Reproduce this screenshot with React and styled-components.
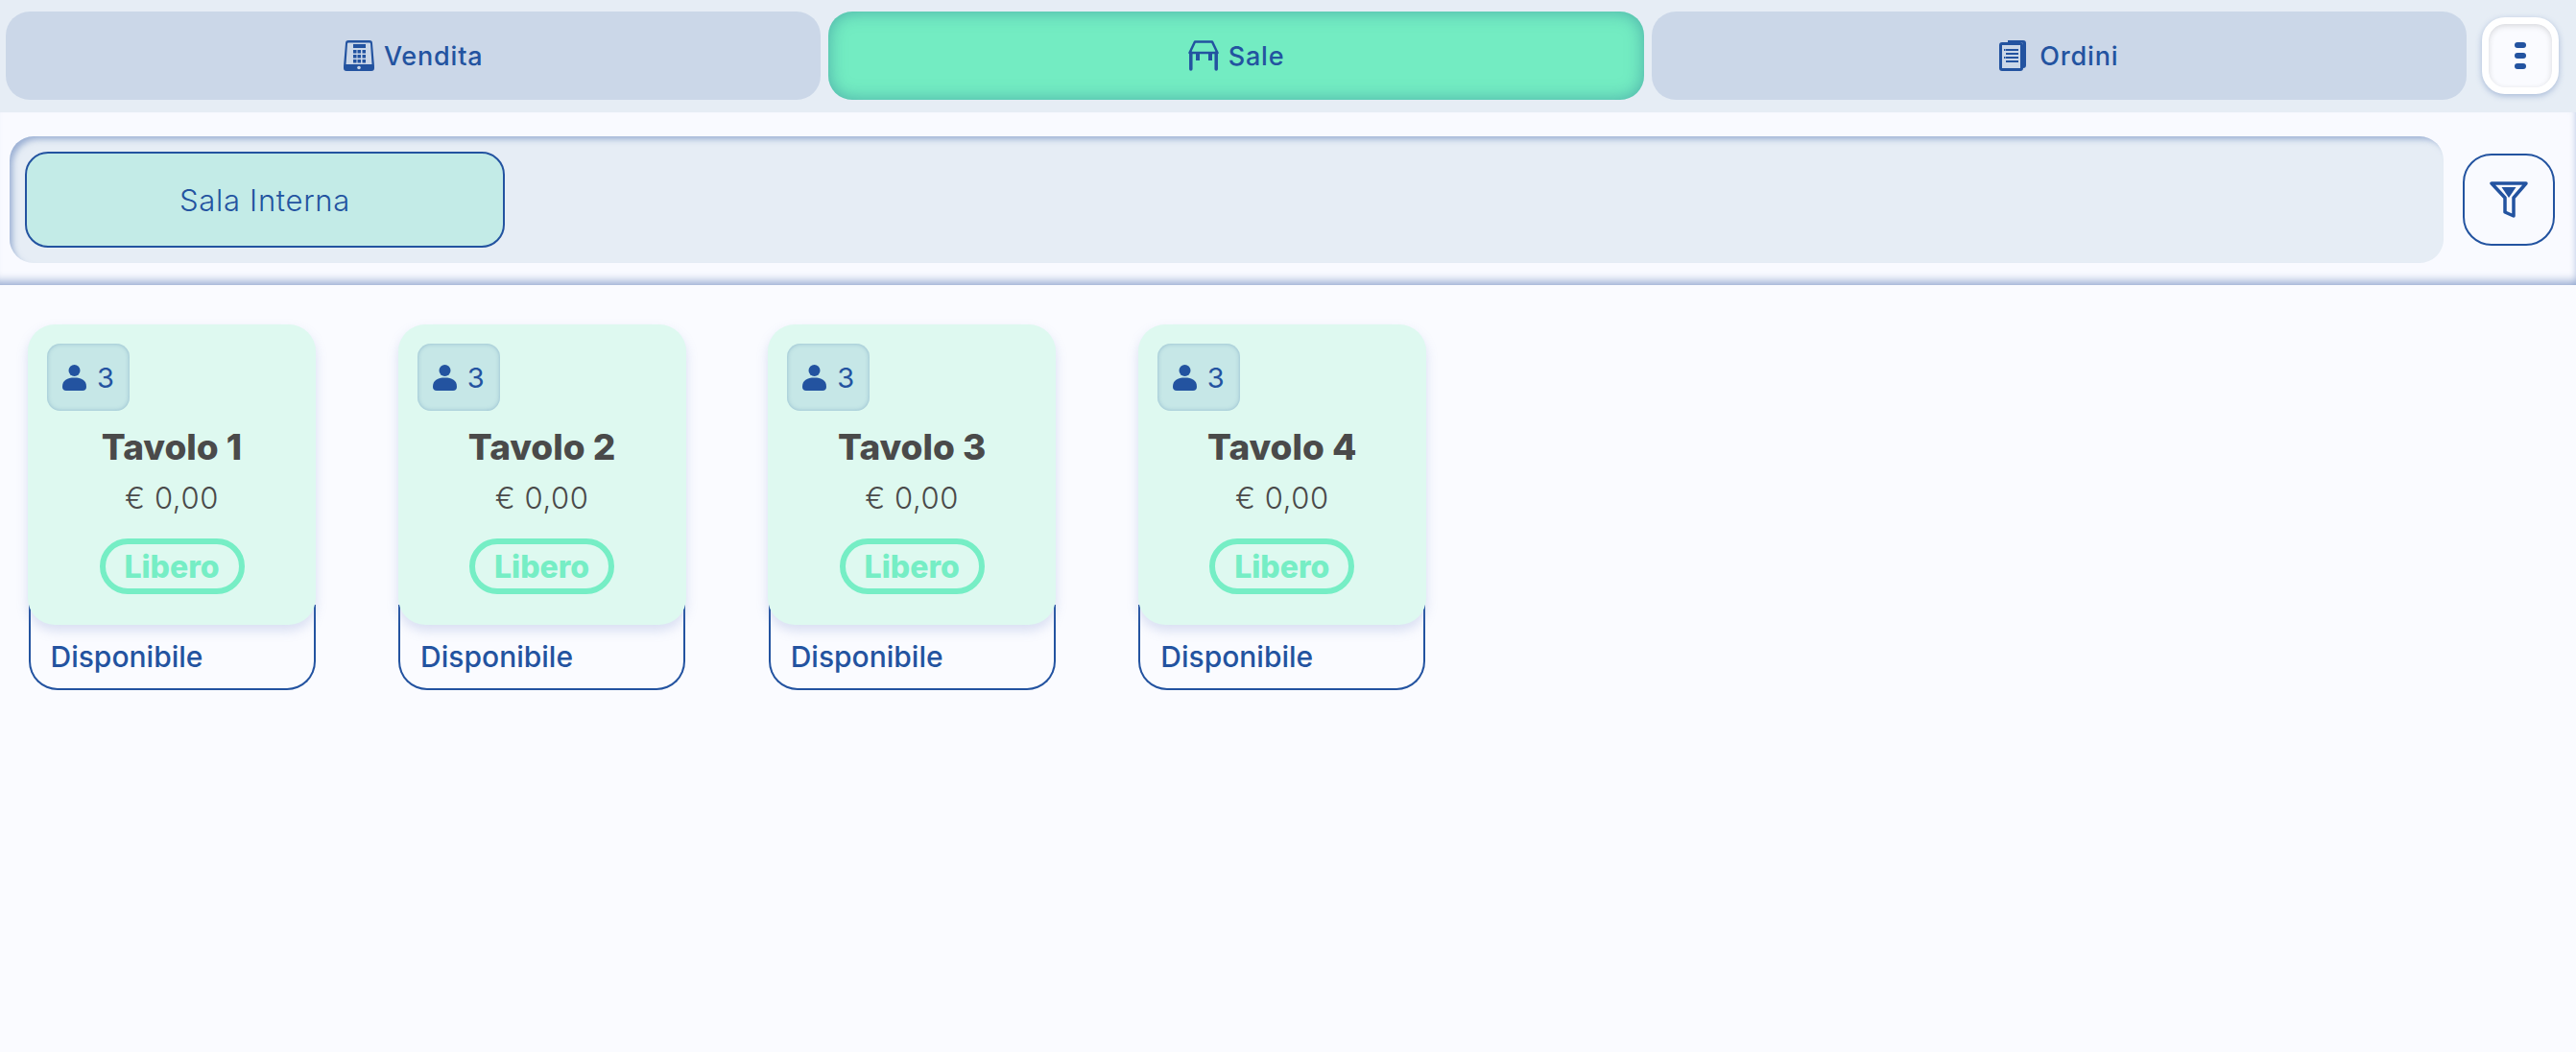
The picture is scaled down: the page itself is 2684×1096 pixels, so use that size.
import React from 'react';
import styled, { createGlobalStyle } from 'styled-components';

const BLUE = '#2353a0';

const Global = createGlobalStyle`
    html, body { margin: 0; padding: 0; background: #fafbff; }
    body { font-family: 'Inter', 'Liberation Sans', sans-serif; }
    * { box-sizing: border-box; }
`;

const Page = styled.div`
    display: flex;
    flex-direction: column;
    width: 2684px;
    height: 1096px;
    background: #fafbff;
    overflow: hidden;
`;

const Header = styled.div`
    display: flex;
    align-items: flex-start;
    height: 117px;
    padding: 12px 18px 0 6px;
    background: #e6edf5;
`;

const Tabs = styled.div`
    display: flex;
    gap: 8px;
    width: 2564px;
`;

const Tab = styled.div`
    flex: 1;
    height: 92px;
    display: flex;
    align-items: center;
    justify-content: center;
    gap: ${p => p.$gap}px;
    border-radius: 25px;
    color: ${BLUE};
    font-size: 27px;
    font-weight: 450;
    letter-spacing: 0.8px;
    background: ${p => (p.$active ? '#73ecc2' : '#cbd7e8')};
    box-shadow: ${p => (p.$active ? 'inset 0 0 18px rgba(50, 130, 150, 0.6)' : 'none')};
`;

const MenuButton = styled.div`
    width: 80px;
    height: 80px;
    margin: 6px 0 0 16px;
    display: flex;
    flex-direction: column;
    align-items: center;
    justify-content: center;
    gap: 5px;
    background: #fafbff;
    border: 7px solid #fff;
    border-radius: 24px;
    box-shadow: 0 2px 6px rgba(90, 125, 180, 0.45), inset 0 2px 6px rgba(0, 0, 0, 0.14);
`;

const Dot = styled.span`
    width: 12px;
    height: 6px;
    border-radius: 3px;
    background: ${BLUE};
`;

const SubBar = styled.div`
    display: flex;
    align-items: flex-start;
    height: 180px;
    padding: 25px 22px 0 10px;
    background: #f9faff;
    box-shadow: inset 0 -12px 10px -8px rgba(120, 145, 195, 0.75), inset -6px 0 6px -5px rgba(130, 155, 200, 0.4);
`;

const RoomsBar = styled.div`
    flex: 1;
    height: 132px;
    padding: 16px;
    background: #e6edf5;
    border-radius: 25px;
    box-shadow: inset 5px 5px 6px -2px rgba(130, 155, 200, 0.75);
`;

const RoomChip = styled.div`
    width: 500px;
    height: 100px;
    display: flex;
    align-items: center;
    justify-content: center;
    border: 2px solid ${BLUE};
    border-radius: 24px;
    background: #c3ebe7;
    color: ${BLUE};
    font-size: 31px;
    font-weight: 350;
    letter-spacing: 0.7px;
`;

const FilterButton = styled.div`
    width: 96px;
    height: 96px;
    margin: 18px 0 0 20px;
    display: flex;
    align-items: center;
    justify-content: center;
    border: 2px solid ${BLUE};
    border-radius: 30px;
`;

const TableGrid = styled.div`
    display: flex;
    gap: 85.6px;
    padding: 41px 0 0 29px;
`;

const TableItem = styled.div`
    width: 300px;
    display: flex;
    flex-direction: column;
    align-items: center;
`;

const TableCard = styled.div`
    position: relative;
    z-index: 1;
    width: 300px;
    height: 313px;
    padding: 20px 20px 0;
    display: flex;
    flex-direction: column;
    align-items: center;
    background: #def9f0;
    border-radius: 28px;
    box-shadow: 0 6px 12px rgba(130, 150, 210, 0.28);
`;

const Seats = styled.div`
    align-self: flex-start;
    width: 86px;
    height: 70px;
    display: flex;
    align-items: center;
    justify-content: center;
    gap: 11px;
    border-radius: 14px;
    background: #c6e7e7;
    color: ${BLUE};
    font-size: 29px;
    box-shadow: inset 0 0 4px rgba(90, 140, 180, 0.5);
`;

const TableName = styled.div`
    margin-top: 16px;
    color: #4a4a4a;
    font-size: 37px;
    line-height: 44px;
    font-weight: 800;
`;

const Price = styled.div`
    margin-top: 12px;
    color: #4a4a4a;
    font-size: 31px;
    line-height: 38px;
    font-weight: 300;
    letter-spacing: 0.6px;
`;

const Status = styled.div`
    margin-top: 23px;
    width: 151px;
    height: 58px;
    display: flex;
    align-items: center;
    justify-content: center;
    border: 6px solid #76eec5;
    border-radius: 29px;
    color: #76eec5;
    font-size: 32px;
    font-weight: 800;
`;

const Availability = styled.div`
    width: 299px;
    height: 89px;
    margin-top: -21px;
    padding: 21px 0 0 21px;
    display: flex;
    align-items: center;
    border: 2px solid ${BLUE};
    border-top: none;
    border-radius: 0 0 30px 30px;
    color: ${BLUE};
    font-size: 30px;
    font-weight: 450;
`;

const VenditaIcon = () => (
    <svg width="32" height="32" viewBox="0 0 32 32" fill={BLUE}>
        <path fillRule="evenodd" d="M5 0h22a3 3 0 0 1 3 3l2 24v2a3 3 0 0 1-3 3H3a3 3 0 0 1-3-3v-2L2 3a3 3 0 0 1 3-3zM5 2.500a1 1 0 0 0-1 1L2.500 25h27L28 3.500a1 1 0 0 0-1-1z" />
        <rect x="10" y="4" width="13" height="4" />
        <rect x="10" y="10" width="3.500" height="3.500" /><rect x="14.500" y="10" width="3.500" height="3.500" /><rect x="19.500" y="10" width="3.500" height="3.500" />
        <rect x="10" y="15" width="3.500" height="3.500" /><rect x="14.500" y="15" width="3.500" height="3.500" /><rect x="19.500" y="15" width="3.500" height="3.500" />
        <rect x="10" y="20" width="3.500" height="3.500" /><rect x="14.500" y="20" width="3.500" height="3.500" /><rect x="19.500" y="20" width="3.500" height="3.500" />
        <circle cx="16" cy="28.500" r="1.800" fill="#cbd7e8" />
    </svg>
);

const SaleIcon = () => (
    <svg width="32" height="32" viewBox="0 0 32 32" fill="none" stroke={BLUE} strokeLinecap="round" strokeLinejoin="round">
        <path strokeWidth="2.500" d="M7 1.500h18l5.500 11.500h-29z" />
        <path strokeWidth="3.500" d="M2.800 13v17M29.200 13v17" />
        <path strokeWidth="4" strokeLinecap="butt" d="M10 13v8M23 13v8" />
    </svg>
);

const OrdiniIcon = () => (
    <svg width="28" height="32" viewBox="0 0 28 32" fill={BLUE}>
        <path fillRule="evenodd" d="M3 2h19a3 3 0 0 1 3 3v24a3 3 0 0 1-3 3H3a3 3 0 0 1-3-3V5a3 3 0 0 1 3-3zM3 5v24h19V5z" />
        <path d="M9 0h16a3 3 0 0 1 3 3v23a3 3 0 0 1-3 3V5a3 3 0 0 0-3-3H9z" />
        <rect x="7" y="9" width="13" height="2" /><rect x="7" y="13" width="13" height="2" /><rect x="7" y="17" width="13" height="2" /><rect x="7" y="21" width="13" height="2" />
        <rect x="5" y="9" width="1.500" height="2" /><rect x="5" y="17" width="1.500" height="2" />
    </svg>
);

const FilterIcon = () => (
    <svg width="40" height="38" viewBox="0 0 40 38" fill="none" stroke={BLUE}>
        <path strokeWidth="3.500" strokeLinejoin="round" d="M2 2h36L25 17v19l-9-4V17z" />
        <path fill={BLUE} stroke="none" d="M12.500 6h15l-7.500 11z" />
    </svg>
);

const PersonIcon = () => (
    <svg width="25" height="27" viewBox="0 0 25 27" fill={BLUE}>
        <circle cx="12.500" cy="6" r="6" />
        <path d="M0 23c0-7 5-9.500 12.500-9.500S25 16 25 23c0 2.500-1.500 4-4 4H4c-2.500 0-4-1.500-4-4z" />
    </svg>
);

const tables = ['Tavolo 1', 'Tavolo 2', 'Tavolo 3', 'Tavolo 4'];

const App = () => {
    return <Page>
        <Global />
        <Header>
            <Tabs>
                <Tab $gap={10}><VenditaIcon />Vendita</Tab>
                <Tab $gap={10} $active><SaleIcon />Sale</Tab>
                <Tab $gap={14}><OrdiniIcon />Ordini</Tab>
            </Tabs>
            <MenuButton><Dot /><Dot /><Dot /></MenuButton>
        </Header>
        <SubBar>
            <RoomsBar>
                <RoomChip>Sala Interna</RoomChip>
            </RoomsBar>
            <FilterButton><FilterIcon /></FilterButton>
        </SubBar>
        <TableGrid>
            {tables.map(name => (
                <TableItem key={name}>
                    <TableCard>
                        <Seats><PersonIcon />3</Seats>
                        <TableName>{name}</TableName>
                        <Price>€ 0,00</Price>
                        <Status>Libero</Status>
                    </TableCard>
                    <Availability>Disponibile</Availability>
                </TableItem>
            ))}
        </TableGrid>
    </Page>;
};

export default App;
